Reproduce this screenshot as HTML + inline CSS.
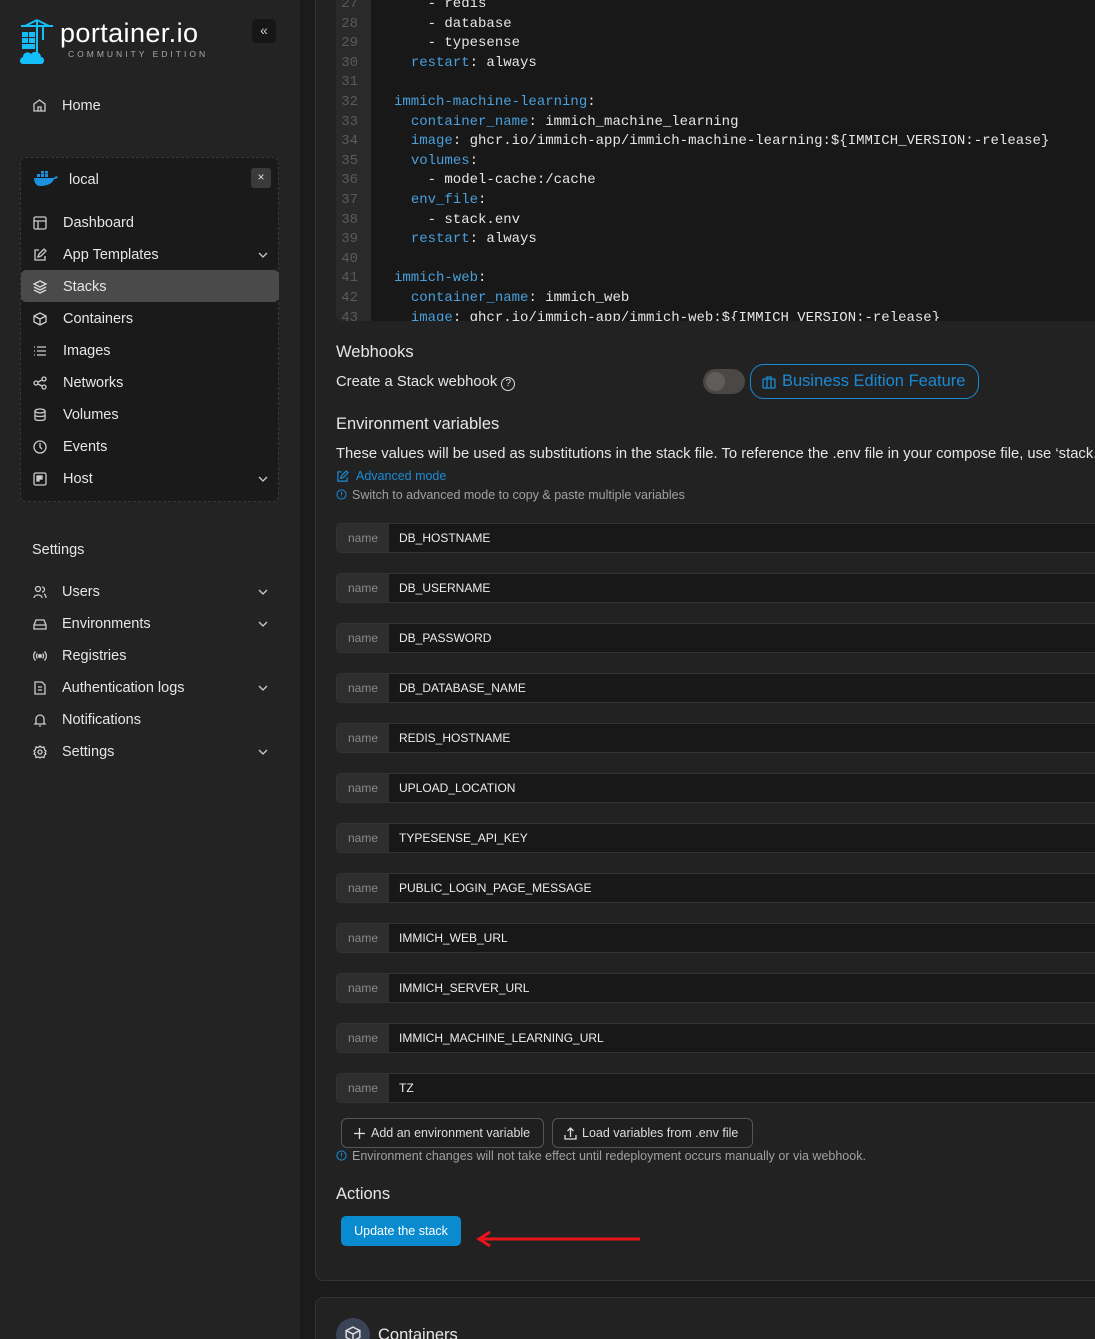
<!DOCTYPE html>
<html style="width:1095px;height:1339px;overflow:hidden"><head><meta charset="utf-8"><style>
*{box-sizing:border-box;margin:0;padding:0}
body{width:1095px;height:1339px;overflow:hidden;background:#1b1b1b;font-family:"Liberation Sans",sans-serif;color:#e6e6e6;position:relative}
.a{position:absolute}
#sb{left:0;top:0;width:300px;height:1339px;background:#232323}
.nav{font-size:14.5px;color:#e6e6e6;position:absolute;left:0;width:100%}
.ico{position:absolute;width:14px;height:14px}
.chev{position:absolute;right:0;width:10px;height:6px}
#box{left:20px;top:157px;width:259px;height:345px;background:#1a1a1a;border:1px dashed #383838;border-radius:6px}
.panel{background:#222;border:1px solid #333;border-radius:8px}
.code{font-family:"Liberation Mono",monospace;font-size:14px;white-space:pre;line-height:19.6px}
.ln{color:#5a5a5a;text-align:right;width:22px}
.k{color:#4a9fdc}
.row{position:absolute;left:336px;width:780px;height:30px;border:1px solid #333;border-radius:5px;background:#181818;overflow:hidden}
.row .n{position:absolute;left:0;top:0;width:52px;height:100%;background:#2e2e2e;color:#8a8a8a;font-size:12px;line-height:28px;text-align:center}
.row .v{position:absolute;left:62px;top:0;line-height:28px;font-size:12px;color:#eee}
.btn{position:absolute;height:30px;border:1px solid #555;border-radius:6px;background:#1f1f1f;font-size:12.5px;line-height:28px;color:#ddd;padding-left:29px;white-space:nowrap}
svg{overflow:visible}
</style></head><body>
<div id="sb" class="a">
 <svg class="a" style="left:19px;top:18px" width="36" height="48" viewBox="0 0 36 48"><g stroke="#13bef9" stroke-width="2" fill="none"><path d="M2 8H34M18 2V36M18 2L6 8M18 2L30 8M24 8V22"/></g><rect x="3" y="14" width="6" height="5" fill="#13bef9"/><rect x="10" y="14" width="6" height="5" fill="#13bef9"/><rect x="3" y="20" width="6" height="5" fill="#13bef9"/><rect x="10" y="20" width="6" height="5" fill="#13bef9"/><rect x="3" y="26" width="13" height="5" fill="#13bef9"/><path d="M4 46C0 46 0 40 4 39C4 34 10 33 12 36C15 32 22 34 22 39C26 39 26 46 22 46Z" fill="#13bef9"/></svg>
 <div class="a" style="left:60px;top:18px;font-size:27px;color:#fff;letter-spacing:0.4px">portainer.io</div>
 <div class="a" style="left:68px;top:49px;font-size:8.5px;color:#aaa;letter-spacing:3px">COMMUNITY EDITION</div>
 <div class="a" style="left:252px;top:19px;width:24px;height:24px;background:#161616;border-radius:4px;color:#ccc;font-size:14px;text-align:center;line-height:22px">«</div>
 <svg class="a" style="left:33px;top:99px" width="13" height="13" viewBox="0 0 13 13" fill="none" stroke="#ccc" stroke-width="1.3"><path d="M1 5L6.5 1 12 5V12H1Z M5 12V8H8V12"/></svg>
 <div class="a" style="left:62px;top:98px;font-size:14.5px">Home</div>
</div>
<div id="box" class="a">
 <svg class="a" style="left:13px;top:13px" width="24" height="15" viewBox="0 0 24 15"><path d="M0 7H20C21 5 23 5 24 6C23 8 21 8 20 8C18 14 10 15 6 15C2 15 0 11 0 7Z" fill="#1d91e0"/><g fill="#1d91e0"><rect x="3" y="3" width="3" height="3"/><rect x="7" y="3" width="3" height="3"/><rect x="11" y="3" width="3" height="3"/><rect x="7" y="0" width="3" height="2.5"/><rect x="11" y="0" width="3" height="2.5"/></g></svg>
 <div class="a" style="left:48px;top:14px;font-size:14.5px">local</div>
 <div class="a" style="left:230px;top:10px;width:20px;height:20px;background:#3a3a3a;border-radius:3px;color:#ddd;font-size:12px;text-align:center;line-height:19px">×</div>
 <div class="a" style="left:0;top:112px;width:258px;height:32px;background:#4a4a4a;border-radius:5px"></div>
</div>
<div class="a" style="left:33px;top:1px;width:235px">
 <div class="nav" style="top:214px;padding-left:30px">Dashboard<svg class="ico" style="left:0;top:1px" viewBox="0 0 14 14" fill="none" stroke="#ccc" stroke-width="1.3"><rect x="1" y="1" width="12" height="12" rx="1.5"/><path d="M1 5H13M5 5V13"/></svg></div>
 <div class="nav" style="top:246px;padding-left:30px">App Templates<svg class="ico" style="left:0;top:1px" viewBox="0 0 14 14" fill="none" stroke="#ccc" stroke-width="1.3"><path d="M6 2H2V12H12V8M5 9L6 6 11 1 13 3 8 8Z"/></svg><svg class="chev" style="top:5px" viewBox="0 0 10 6" fill="none" stroke="#ccc" stroke-width="1.3"><path d="M1 1L5 5 9 1"/></svg></div>
 <div class="nav" style="top:278px;padding-left:30px">Stacks<svg class="ico" style="left:0;top:1px" viewBox="0 0 14 14" fill="none" stroke="#ddd" stroke-width="1.3"><path d="M7 1L13 4 7 7 1 4Z M1 7L7 10 13 7 M1 10L7 13 13 10"/></svg></div>
 <div class="nav" style="top:310px;padding-left:30px">Containers<svg class="ico" style="left:0;top:1px" viewBox="0 0 14 14" fill="none" stroke="#ccc" stroke-width="1.3"><path d="M7 1L13 4V10L7 13 1 10V4Z M1 4L7 7 13 4 M7 7V13"/></svg></div>
 <div class="nav" style="top:342px;padding-left:30px">Images<svg class="ico" style="left:0;top:1px" viewBox="0 0 14 14" fill="none" stroke="#ccc" stroke-width="1.3"><path d="M4 3H13M4 7H13M4 11H13M1 3H2M1 7H2M1 11H2"/></svg></div>
 <div class="nav" style="top:374px;padding-left:30px">Networks<svg class="ico" style="left:0;top:1px" viewBox="0 0 14 14" fill="none" stroke="#ccc" stroke-width="1.3"><circle cx="3" cy="7" r="2"/><circle cx="11" cy="3" r="2"/><circle cx="11" cy="11" r="2"/><path d="M5 6L9 4M5 8L9 10"/></svg></div>
 <div class="nav" style="top:406px;padding-left:30px">Volumes<svg class="ico" style="left:0;top:1px" viewBox="0 0 14 14" fill="none" stroke="#ccc" stroke-width="1.3"><ellipse cx="7" cy="3" rx="5" ry="2"/><path d="M2 3V11C2 13 12 13 12 11V3M2 7C2 9 12 9 12 7"/></svg></div>
 <div class="nav" style="top:438px;padding-left:30px">Events<svg class="ico" style="left:0;top:1px" viewBox="0 0 14 14" fill="none" stroke="#ccc" stroke-width="1.3"><circle cx="7" cy="7" r="6"/><path d="M7 3V7L9 9"/></svg></div>
 <div class="nav" style="top:470px;padding-left:30px">Host<svg class="ico" style="left:0;top:1px" viewBox="0 0 14 14" fill="none" stroke="#ccc" stroke-width="1.3"><rect x="1" y="1" width="12" height="12" rx="1.5"/><rect x="4" y="4" width="2" height="5" fill="#ccc"/><rect x="7" y="4" width="2" height="3" fill="#ccc"/></svg><svg class="chev" style="top:5px" viewBox="0 0 10 6" fill="none" stroke="#ccc" stroke-width="1.3"><path d="M1 1L5 5 9 1"/></svg></div>
 <div class="nav" style="top:541px;left:-1px">Settings</div>
 <div class="nav" style="top:583px;padding-left:29px">Users<svg class="ico" style="left:0;top:1px" viewBox="0 0 14 14" fill="none" stroke="#ccc" stroke-width="1.3"><circle cx="5" cy="4" r="2.5"/><path d="M1 13C1 9 9 9 9 13M9 2A2.5 2.5 0 0 1 9 7M11 9C13 10 13 12 13 13"/></svg><svg class="chev" style="top:5px" viewBox="0 0 10 6" fill="none" stroke="#ccc" stroke-width="1.3"><path d="M1 1L5 5 9 1"/></svg></div>
 <div class="nav" style="top:615px;padding-left:29px">Environments<svg class="ico" style="left:0;top:1px" viewBox="0 0 14 14" fill="none" stroke="#ccc" stroke-width="1.3"><path d="M1 8L3 3H11L13 8V12H1Z M1 8H13"/></svg><svg class="chev" style="top:5px" viewBox="0 0 10 6" fill="none" stroke="#ccc" stroke-width="1.3"><path d="M1 1L5 5 9 1"/></svg></div>
 <div class="nav" style="top:647px;padding-left:29px">Registries<svg class="ico" style="left:0;top:1px" viewBox="0 0 14 14" fill="none" stroke="#ccc" stroke-width="1.3"><circle cx="7" cy="7" r="1.3" fill="#ccc"/><path d="M4.5 4.5A3.5 3.5 0 0 0 4.5 9.5M9.5 4.5A3.5 3.5 0 0 1 9.5 9.5M2.5 2.5A6.5 6.5 0 0 0 2.5 11.5M11.5 2.5A6.5 6.5 0 0 1 11.5 11.5"/></svg></div>
 <div class="nav" style="top:679px;padding-left:29px">Authentication logs<svg class="ico" style="left:0;top:1px" viewBox="0 0 14 14" fill="none" stroke="#ccc" stroke-width="1.3"><path d="M2 1H9L12 4V13H2Z M5 6H9M5 9H9"/></svg><svg class="chev" style="top:5px" viewBox="0 0 10 6" fill="none" stroke="#ccc" stroke-width="1.3"><path d="M1 1L5 5 9 1"/></svg></div>
 <div class="nav" style="top:711px;padding-left:29px">Notifications<svg class="ico" style="left:0;top:1px" viewBox="0 0 14 14" fill="none" stroke="#ccc" stroke-width="1.3"><path d="M3 10V6A4 4 0 0 1 11 6V10L12 11H2Z M6 13H8"/></svg></div>
 <div class="nav" style="top:743px;padding-left:29px">Settings<svg class="ico" style="left:0;top:1px" viewBox="0 0 14 14" fill="none" stroke="#ccc" stroke-width="1.3"><circle cx="7" cy="7" r="2"/><path d="M7 1L8.5 2.5 11 2 11.5 4.5 13 6 12 7.5 13 9 11.5 10 11 12.5 8.5 12 7 13 5.5 12 3 12.5 2.5 10 1 9 2 7.5 1 6 2.5 4.5 3 2 5.5 2.5Z"/></svg><svg class="chev" style="top:5px" viewBox="0 0 10 6" fill="none" stroke="#ccc" stroke-width="1.3"><path d="M1 1L5 5 9 1"/></svg></div>
</div>

<div class="a panel" style="left:315px;top:-20px;width:800px;height:1301px"></div>
<div class="a" style="left:336px;top:0;width:760px;height:321px;background:#181818;overflow:hidden;border-bottom-left-radius:6px">
 <div class="a" style="left:0;top:0;width:35px;height:321px;background:#2a2a2a"></div>
 <div class="a code ln" style="left:0;top:-5px;width:22px">27
28
29
30
31
32
33
34
35
36
37
38
39
40
41
42
43</div>
 <div class="a code" style="left:58px;top:-5px;color:#e6e6e6">    - redis
    - database
    - typesense
  <span class="k">restart</span>: always

<span class="k">immich-machine-learning</span>:
  <span class="k">container_name</span>: immich_machine_learning
  <span class="k">image</span>: ghcr.io/immich-app/immich-machine-learning:${IMMICH_VERSION:-release}
  <span class="k">volumes</span>:
    - model-cache:/cache
  <span class="k">env_file</span>:
    - stack.env
  <span class="k">restart</span>: always

<span class="k">immich-web</span>:
  <span class="k">container_name</span>: immich_web
  <span class="k">image</span>: ghcr.io/immich-app/immich-web:${IMMICH_VERSION:-release}</div>
</div>

<div class="a" style="left:336px;top:343px;font-size:16.5px">Webhooks</div>
<div class="a" style="left:336px;top:374px;font-size:14.8px">Create a Stack webhook <span style="display:inline-block;width:14px;height:14px;border:1.3px solid #ddd;border-radius:50%;font-size:10px;text-align:center;line-height:12px;vertical-align:0px">?</span></div>
<div class="a" style="left:703px;top:369px;width:42px;height:25px;border-radius:13px;background:#4a4744"><div class="a" style="left:3px;top:3px;width:19px;height:19px;border-radius:50%;background:#5f5c59"></div></div>
<div class="a" style="left:750px;top:364px;width:229px;height:35px;border:1.3px solid #1a8ad4;border-radius:14px;color:#1a8ad4;font-size:16.5px;line-height:33px;padding-left:31px;white-space:nowrap">Business Edition Feature<svg class="a" style="left:11px;top:10px" width="14" height="14" viewBox="0 0 14 14" fill="none" stroke="#1a8ad4" stroke-width="1.3"><rect x="1" y="4" width="12" height="9" rx="1"/><path d="M5 4V2H9V4M5 4V13M9 4V13"/></svg></div>
<div class="a" style="left:336px;top:415px;font-size:16.5px">Environment variables</div>
<div class="a" style="left:336px;top:446px;font-size:14.8px;white-space:nowrap">These values will be used as substitutions in the stack file. To reference the .env file in your compose file, use ‘stack.env’</div>
<div class="a" style="left:336px;top:469px;font-size:12.5px;color:#1a8ad4;padding-left:20px">Advanced mode<svg class="a" style="left:0;top:1px" width="13" height="13" viewBox="0 0 14 14" fill="none" stroke="#1a8ad4" stroke-width="1.3"><path d="M6 2H2V12H12V8M5 9L6 6 11 1 13 3 8 8Z"/></svg></div>
<div class="a" style="left:336px;top:488px;font-size:12.5px;color:#a0a0a0;padding-left:16px;white-space:nowrap">Switch to advanced mode to copy &amp; paste multiple variables<svg class="a" style="left:0;top:1px" width="11" height="11" viewBox="0 0 12 12" fill="none" stroke="#1a8ad4" stroke-width="1.1"><circle cx="6" cy="6" r="5"/><path d="M6 3V7M6 8.5V9"/></svg></div>

<div class="row" style="top:523px"><div class="n">name</div><div class="v">DB_HOSTNAME</div></div>
<div class="row" style="top:573px"><div class="n">name</div><div class="v">DB_USERNAME</div></div>
<div class="row" style="top:623px"><div class="n">name</div><div class="v">DB_PASSWORD</div></div>
<div class="row" style="top:673px"><div class="n">name</div><div class="v">DB_DATABASE_NAME</div></div>
<div class="row" style="top:723px"><div class="n">name</div><div class="v">REDIS_HOSTNAME</div></div>
<div class="row" style="top:773px"><div class="n">name</div><div class="v">UPLOAD_LOCATION</div></div>
<div class="row" style="top:823px"><div class="n">name</div><div class="v">TYPESENSE_API_KEY</div></div>
<div class="row" style="top:873px"><div class="n">name</div><div class="v">PUBLIC_LOGIN_PAGE_MESSAGE</div></div>
<div class="row" style="top:923px"><div class="n">name</div><div class="v">IMMICH_WEB_URL</div></div>
<div class="row" style="top:973px"><div class="n">name</div><div class="v">IMMICH_SERVER_URL</div></div>
<div class="row" style="top:1023px"><div class="n">name</div><div class="v">IMMICH_MACHINE_LEARNING_URL</div></div>
<div class="row" style="top:1073px"><div class="n">name</div><div class="v">TZ</div></div>

<div class="btn" style="left:341px;top:1118px;width:203px">Add an environment variable<svg class="a" style="left:12px;top:9px" width="11" height="11" viewBox="0 0 11 11" stroke="#ddd" stroke-width="1.3"><path d="M5.5 0V11M0 5.5H11"/></svg></div>
<div class="btn" style="left:552px;top:1118px;width:201px">Load variables from .env file<svg class="a" style="left:11px;top:8px" width="13" height="13" viewBox="0 0 13 13" fill="none" stroke="#ddd" stroke-width="1.3"><path d="M1 8V12H12V8M6.5 10V1M3.5 4L6.5 1 9.5 4"/></svg></div>
<div class="a" style="left:336px;top:1149px;font-size:12.5px;color:#a0a0a0;padding-left:16px;white-space:nowrap">Environment changes will not take effect until redeployment occurs manually or via webhook.<svg class="a" style="left:0;top:1px" width="11" height="11" viewBox="0 0 12 12" fill="none" stroke="#1a8ad4" stroke-width="1.1"><circle cx="6" cy="6" r="5"/><path d="M6 3V7M6 8.5V9"/></svg></div>
<div class="a" style="left:336px;top:1185px;font-size:16.5px">Actions</div>
<div class="a" style="left:341px;top:1216px;width:120px;height:30px;background:#0a8bd0;border-radius:5px;color:#fff;font-size:12.5px;text-align:center;line-height:30px">Update the stack</div>
<svg class="a" style="left:476px;top:1231px" width="166" height="18" viewBox="0 0 166 18"><path d="M164 8H6" stroke="#e8141a" stroke-width="3"/><path d="M14 1L3 8 14 15" stroke="#e8141a" stroke-width="3" fill="none"/></svg>

<div class="a panel" style="left:315px;top:1297px;width:800px;height:42px;border-bottom:none;border-bottom-left-radius:0"></div>
<div class="a" style="left:336px;top:1318px;width:34px;height:34px;border-radius:50%;background:#3b4456"></div>
<svg class="a" style="left:345px;top:1326px" width="16" height="16" viewBox="0 0 14 14" fill="none" stroke="#ddd" stroke-width="1.3"><path d="M7 1L13 4V10L7 13 1 10V4Z M1 4L7 7 13 4 M7 7V13"/></svg>
<div class="a" style="left:378px;top:1326px;font-size:16.5px">Containers</div>
</body></html>
